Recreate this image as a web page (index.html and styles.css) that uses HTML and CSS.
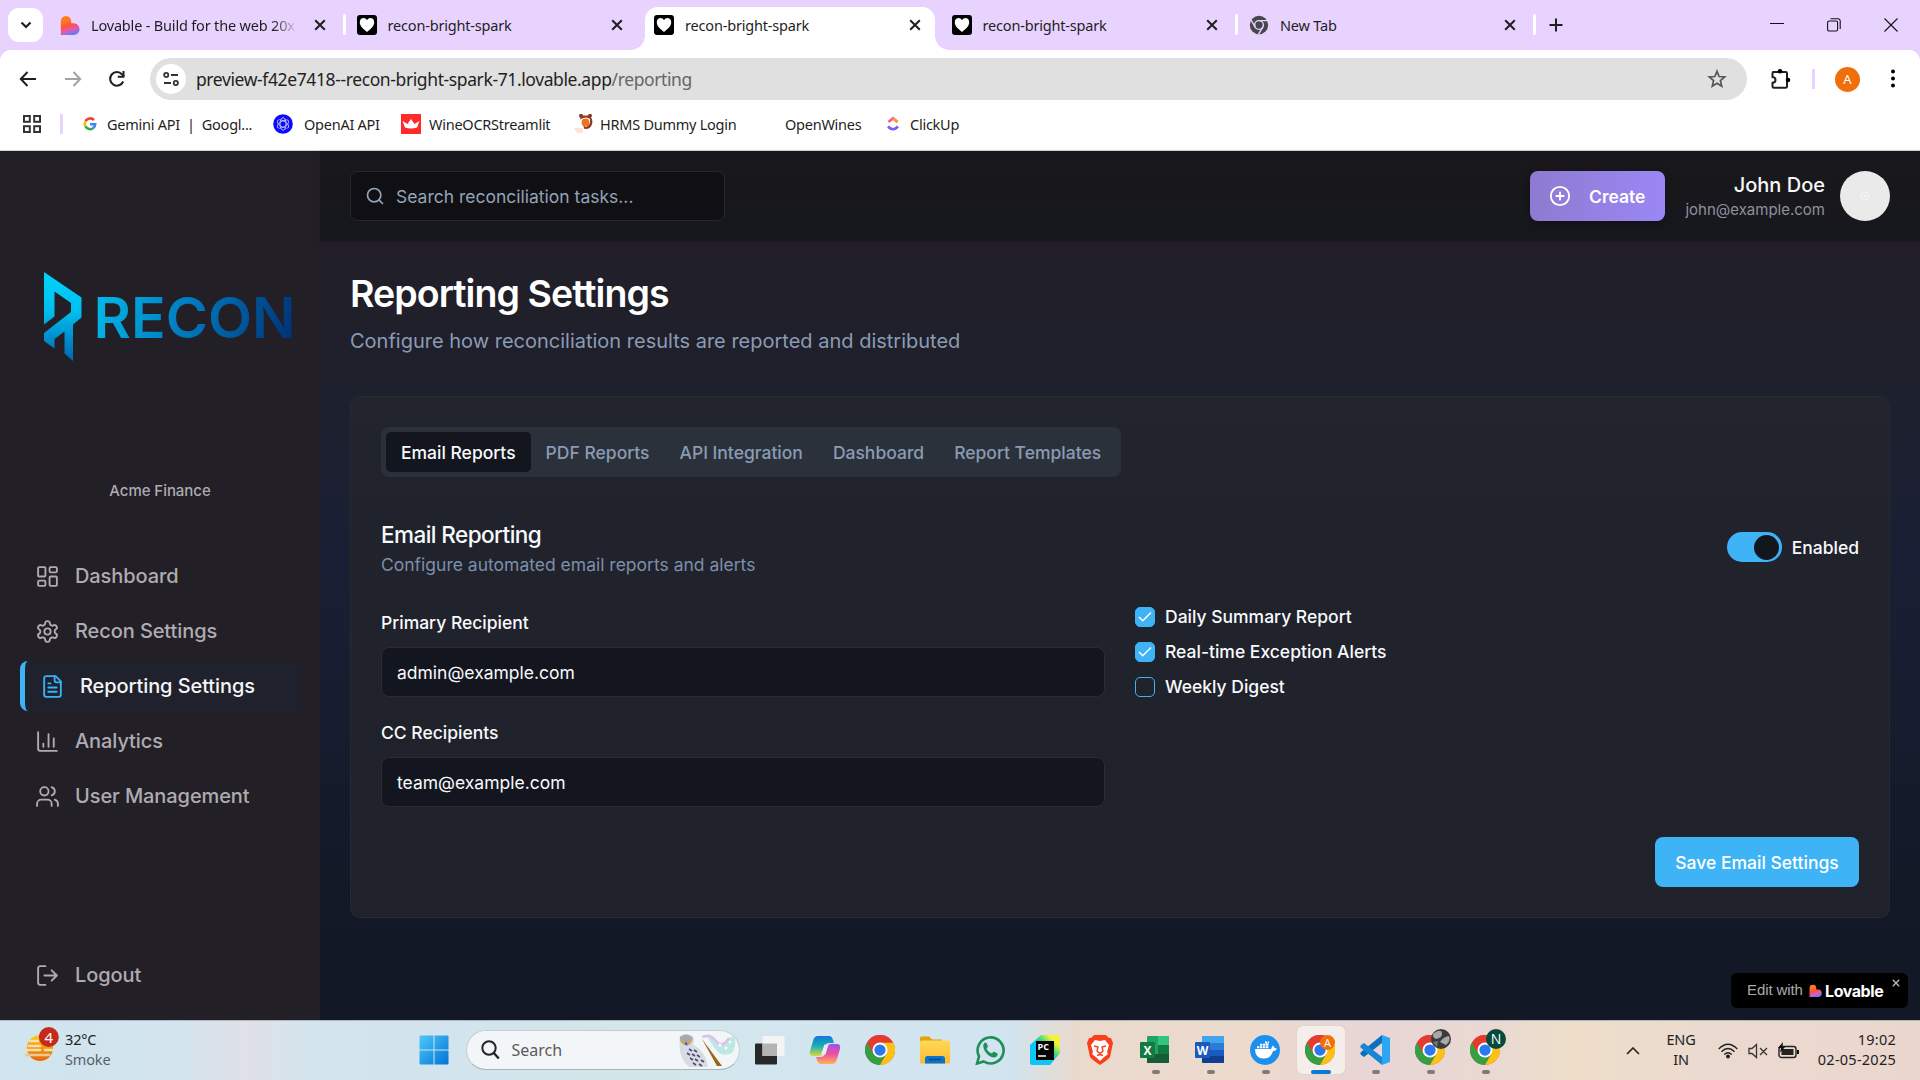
FILE: index.html
```html
<!DOCTYPE html>
<html lang="en">
<head>
<meta charset="utf-8">
<title>recon-bright-spark</title>
<link rel="stylesheet" href="styles.css">
</head>
<body>
<svg class="defs" width="0" height="0">
  <defs>
    <linearGradient id="lovable" x1="0.3" y1="0" x2="0.6" y2="1"><stop offset="0.2" stop-color="#ff7a1a"/><stop offset="0.5" stop-color="#ff5040"/><stop offset="0.72" stop-color="#e05bb0"/><stop offset="1" stop-color="#5c7cff"/></linearGradient>
    <linearGradient id="gold" x1="0" y1="0" x2="0" y2="1"><stop offset="0" stop-color="#ffd75a"/><stop offset="1" stop-color="#fdbb2d"/></linearGradient>
    <linearGradient id="win" x1="0" y1="0" x2="1" y2="1"><stop offset="0" stop-color="#4cc9fb"/><stop offset="1" stop-color="#0273d4"/></linearGradient>
    <symbol id="s-lovable" viewBox="0 0 24 24"><path d="M1 7.500a6.200 6.200 0 0 1 12.400 0V10h3.100a6.900 6.900 0 0 1 0 14H1z" fill="url(#lovable)"/></symbol>
    <symbol id="s-heart" viewBox="0 0 20 20"><rect width="20" height="20" rx="3"/><path d="M10 17C5 13 2.800 10.500 2.800 7.200c0-4.400 5.200-5.500 7.200-2 2-3.500 7.200-2.400 7.200 2C17.200 10.500 15 13 10 17z" fill="#fff"/></symbol>
    <symbol id="s-x" viewBox="0 0 10 10"><path d="M1 1l8 8M9 1L1 9" stroke="currentColor" stroke-width="1.700" fill="none"/></symbol>
    <symbol id="s-chrome" viewBox="0 0 48 48"><circle cx="24" cy="24" r="24" fill="#ea4335"/><path d="M3.200 12A24 24 0 0 0 24 48l10.400-18L13.600 30z" fill="#34a043"/><path d="M24 48A24 24 0 0 0 44.800 12H24l10.400 18z" fill="#fbc116"/><path d="M3.200 12A24 24 0 0 1 44.800 12H24L13.600 30z" fill="#e33b2e"/><circle cx="24" cy="24" r="12" fill="#fff"/><circle cx="24" cy="24" r="9" fill="#2b78ee"/></symbol>
  </defs>
</svg>

<header class="browser">
  <div class="tabstrip">
    <button class="tabsearch"><svg width="12" height="8" viewBox="0 0 12 8"><path d="M1.500 1.500L6 6l4.500-4.500" fill="none" stroke="#1f1f1f" stroke-width="2.200"/></svg></button>
    <div class="tab first"><svg class="fav" width="20" height="20"><use href="#s-lovable"/></svg><span class="t fade">Lovable - Build for the web 20x</span><svg class="x" width="12" height="12"><use href="#s-x"/></svg></div>
    <div class="tab sepl"><svg class="fav" width="20" height="20"><use href="#s-heart"/></svg><span class="t">recon-bright-spark</span><svg class="x" width="12" height="12"><use href="#s-x"/></svg></div>
    <div class="tab active"><svg class="fav" width="20" height="20"><use href="#s-heart"/></svg><span class="t">recon-bright-spark</span><svg class="x" width="12" height="12"><use href="#s-x"/></svg></div>
    <div class="tab"><svg class="fav" width="20" height="20"><use href="#s-heart"/></svg><span class="t">recon-bright-spark</span><svg class="x" width="12" height="12"><use href="#s-x"/></svg></div>
    <div class="tab sepl sepr"><svg class="fav" width="20" height="20" viewBox="0 0 48 48"><circle cx="24" cy="24" r="22" fill="#46474b"/><g stroke="#e8d3ff" stroke-width="3.500" fill="none"><circle cx="24" cy="24" r="10.500"/><path d="M24 13.500H44M15 29L5 12M33 29L23 46"/></g></svg><span class="t">New Tab</span><svg class="x" width="12" height="12"><use href="#s-x"/></svg></div>
    <svg class="plus" width="14" height="14" viewBox="0 0 14 14"><path d="M7 .5v13M.5 7h13" stroke="#1f1f1f" stroke-width="2"/></svg>
    <div class="winctl">
      <svg width="14" height="14" viewBox="0 0 14 14"><path d="M0 5.500h14" stroke="#111"/></svg>
      <svg width="14" height="14" viewBox="0 0 14 14"><g fill="none" stroke="#111" stroke-width="1.100"><rect x=".6" y="3" width="10" height="10" rx="1.500"/><path d="M3.500 .8h7.500a2.200 2.200 0 0 1 2.200 2.200v8"/></g></svg>
      <svg width="14" height="14" viewBox="0 0 14 14"><path d="M.5.5l13 13M13.500.5l-13 13" stroke="#111" stroke-width="1.100"/></svg>
    </div>
  </div>
  <div class="toolbar">
    <div class="navbtns">
      <svg width="18" height="16" viewBox="0 0 18 16"><path d="M17 8H2M8.500 1L1.800 8l6.700 7" fill="none" stroke="#1f1f1f" stroke-width="2"/></svg>
      <svg width="18" height="16" viewBox="0 0 18 16"><path d="M1 8h15M9.500 1l6.700 7-6.700 7" fill="none" stroke="#a3a3a3" stroke-width="2"/></svg>
      <svg width="18" height="18" viewBox="0 0 18 18"><path d="M15.200 11.500A6.800 6.800 0 1 1 14 4.300l2 2" fill="none" stroke="#1f1f1f" stroke-width="2"/><path d="M15.500 1v5.700H9.800" fill="none" stroke="#1f1f1f" stroke-width="2"/></svg>
    </div>
    <div class="omni">
      <span class="site"><svg width="16" height="14" viewBox="0 0 16 14"><g fill="none" stroke="#333" stroke-width="1.800"><circle cx="3.200" cy="3" r="2.100"/><path d="M8 3h7M1 11h7"/><circle cx="12.800" cy="11" r="2.100"/></g></svg></span>
      <span class="url">preview-f42e7418--recon-bright-spark-71.lovable.app<span class="path">/reporting</span></span>
      <svg class="star" width="20" height="20" viewBox="0 0 20 20"><path d="M10 2.200l2.100 5.300 5.600.4-4.300 3.700 1.300 5.600L10 14.200l-4.700 3 1.300-5.600L2.300 7.900l5.600-.4z" fill="none" stroke="#555" stroke-width="1.700"/></svg>
    </div>
    <svg class="puzzle" width="22" height="22" viewBox="0 0 22 22"><path d="M2.500 4h13.200q1.300 0 1.300 1.300v13.200q0 1.300-1.300 1.300H3.800q-1.300 0-1.300-1.300v-3.700c4-.5 4-5.300 0-5.800V5.300q0-1.300 1.300-1.300z" fill="none" stroke="#1f1f1f" stroke-width="2"/><circle cx="10" cy="3.200" r="2.300"/><circle cx="18" cy="12" r="2.300"/></svg>
    <i class="tsep"></i>
    <span class="ava">A</span>
    <svg class="dots" width="6" height="22" viewBox="0 0 6 22"><circle cx="3" cy="3.500" r="2"/><circle cx="3" cy="10.500" r="2"/><circle cx="3" cy="17.500" r="2"/></svg>
  </div>
  <div class="bookmarks">
    <svg class="apps" width="18" height="18" viewBox="0 0 18 18"><g fill="none" stroke="#333" stroke-width="2"><rect x="1" y="1" width="5.800" height="5.800"/><rect x="11.200" y="1" width="5.800" height="5.800"/><rect x="1" y="11.200" width="5.800" height="5.800"/><rect x="11.200" y="11.200" width="5.800" height="5.800"/></g></svg>
    <i class="bsep"></i>
    <div class="bm gem"><svg width="20" height="20" viewBox="0 0 20 20"><g fill="none" stroke-width="2.600"><path d="M14 6a5.300 5.300 0 0 0-8.500 1.200" stroke="#ea4335"/><path d="M5.400 7.200a5.500 5.500 0 0 0 0 5.200" stroke="#fbbc05"/><path d="M5.400 12.400a5.300 5.300 0 0 0 8 1.600" stroke="#34a853"/><path d="M13.300 14.100a5 5 0 0 0 1.900-3.800H10" stroke="#4285f4"/></g></svg><span>Gemini API &nbsp;|&nbsp; Googl...</span></div>
    <div class="bm oai"><svg width="20" height="20" viewBox="0 0 20 20"><circle cx="10" cy="10" r="9.800" fill="#0a0aff"/><g fill="none" stroke="#c8cbff" stroke-width=".9"><ellipse cx="10" cy="10" rx="3" ry="6.300"/><ellipse cx="10" cy="10" rx="3" ry="6.300" transform="rotate(60 10 10)"/><ellipse cx="10" cy="10" rx="3" ry="6.300" transform="rotate(120 10 10)"/></g></svg><span>OpenAI API</span></div>
    <div class="bm wine"><svg width="20" height="20" viewBox="0 0 20 20"><path fill="#ff2b2b" d="M0 0h20v20H0z"/><path d="M1.500 7l5 3L10 5l3.500 5 5-3-2.500 6.500q-6 1.800-12 0z" fill="#fff"/></svg><span>WineOCRStreamlit</span></div>
    <div class="bm hrms"><svg width="20" height="20" viewBox="0 0 20 20"><path d="M0 14h9v5H3z" fill="#fbe4d5"/><path d="M6 3.500a2 2 0 1 1 3-2l5 0a2 2 0 1 1 3 2q2.500 3 .5 8-2 4-7 3.500" fill="#8c3b22"/><path d="M7 5q5-3 9 0 1 6-4 8-6-2-5-8z" fill="#fff"/><circle cx="11.500" cy="8.500" r="3.900" fill="#f0731b"/></svg><span>HRMS Dummy Login</span></div>
    <div class="bm ow"><span>OpenWines</span></div>
    <div class="bm cu"><svg width="20" height="20" viewBox="0 0 20 20"><path d="M5.500 8L10 4.200 14.500 8" fill="none" stroke="#ff5b8c" stroke-width="2.700"/><path d="M10 4.200L14.500 8" stroke="#ff9a2b" stroke-width="2.700"/><path d="M5 12.500q5 5.500 10 0" fill="none" stroke="#7a5cff" stroke-width="2.700"/></svg><span>ClickUp</span></div>
  </div>
</header>

<div class="app">
  <aside class="side">
    <svg class="logo" width="260" height="92" viewBox="0 0 260 92">
      <defs>
        <linearGradient id="lg1" x1="0" y1="0" x2="0" y2="1"><stop offset="0.1" stop-color="#00d0f8"/><stop offset="0.45" stop-color="#00bdee"/><stop offset="1" stop-color="#0064b0"/></linearGradient>
        <linearGradient id="lg2" gradientUnits="userSpaceOnUse" x1="60" y1="15" x2="245" y2="78"><stop offset="0" stop-color="#02b8ea"/><stop offset="0.5" stop-color="#0076bb"/><stop offset="1" stop-color="#003478"/></linearGradient>
      </defs>
      <path fill="url(#lg1)" d="M4 1l37.500 25.500v20l-8.500 7V90l-8.500-7.500V60.500L14.500 68v9.500L4 70V62l27-21V32L14.500 20.500v25L4 53.500z"/>
      <text class="brand" x="53.500" y="67" textLength="202" lengthAdjust="spacingAndGlyphs" fill="url(#lg2)">RECON</text>
    </svg>
    <p class="org">Acme Finance</p>
    <nav class="nav">
      <a class="ni"><svg class="ic" viewBox="0 0 24 24"><rect x="3" y="3" width="7" height="9" rx="1"/><rect x="14" y="3" width="7" height="5" rx="1"/><rect x="14" y="12" width="7" height="9" rx="1"/><rect x="3" y="16" width="7" height="5" rx="1"/></svg>Dashboard</a>
      <a class="ni"><svg class="ic" viewBox="0 0 24 24"><path d="M12.220 2h-.44a2 2 0 0 0-2 2v.18a2 2 0 0 1-1 1.730l-.43.25a2 2 0 0 1-2 0l-.15-.08a2 2 0 0 0-2.730.73l-.22.38a2 2 0 0 0 .73 2.730l.15.1a2 2 0 0 1 1 1.720v.51a2 2 0 0 1-1 1.740l-.15.09a2 2 0 0 0-.73 2.730l.22.38a2 2 0 0 0 2.730.73l.15-.08a2 2 0 0 1 2 0l.43.25a2 2 0 0 1 1 1.730V20a2 2 0 0 0 2 2h.44a2 2 0 0 0 2-2v-.18a2 2 0 0 1 1-1.730l.43-.25a2 2 0 0 1 2 0l.15.08a2 2 0 0 0 2.730-.73l.22-.39a2 2 0 0 0-.73-2.730l-.15-.08a2 2 0 0 1-1-1.740v-.5a2 2 0 0 1 1-1.740l.15-.09a2 2 0 0 0 .73-2.730l-.22-.38a2 2 0 0 0-2.730-.73l-.15.08a2 2 0 0 1-2 0l-.43-.25a2 2 0 0 1-1-1.730V4a2 2 0 0 0-2-2z"/><circle cx="12" cy="12" r="3"/></svg>Recon Settings</a>
      <a class="ni on"><svg class="ic" viewBox="0 0 24 24"><path d="M15 2H6a2 2 0 0 0-2 2v16a2 2 0 0 0 2 2h12a2 2 0 0 0 2-2V7Z"/><path d="M14 2v4a2 2 0 0 0 2 2h4M10 9H8M16 13H8M16 17H8"/></svg>Reporting Settings</a>
      <a class="ni"><svg class="ic" viewBox="0 0 24 24"><path d="M3 3v16a2 2 0 0 0 2 2h16M18 17V9M13 17V5M8 17v-3"/></svg>Analytics</a>
      <a class="ni"><svg class="ic" viewBox="0 0 24 24"><path d="M16 21v-2a4 4 0 0 0-4-4H6a4 4 0 0 0-4 4v2"/><circle cx="9" cy="7" r="4"/><path d="M22 21v-2a4 4 0 0 0-3-3.870M16 3.130a4 4 0 0 1 0 7.750"/></svg>User Management</a>
    </nav>
    <a class="ni out"><svg class="ic" viewBox="0 0 24 24"><path d="M10 3H5a2 2 0 0 0-2 2v14a2 2 0 0 0 2 2h5M16 17l5-5-5-5M21 12H9"/></svg>Logout</a>
  </aside>
  <div class="content">
    <div class="top">
      <div class="search"><svg width="20" height="20" viewBox="0 0 24 24" fill="none" stroke="#94a3b8" stroke-width="2" stroke-linecap="round"><circle cx="11" cy="11" r="8"/><path d="M21 21l-4.300-4.300"/></svg><span>Search reconciliation tasks...</span></div>
      <button class="create"><svg width="22" height="22" viewBox="0 0 24 24" fill="none" stroke="#fff" stroke-width="2" stroke-linecap="round"><circle cx="12" cy="12" r="10"/><path d="M8 12h8M12 8v8"/></svg><span>Create</span></button>
      <div class="who"><b>John Doe</b><span>john@example.com</span></div>
      <svg class="pic" width="50" height="50" viewBox="0 0 50 50"><circle cx="25" cy="25" r="25" fill="#eaeaea"/><circle cx="25" cy="25" r="5" fill="#efefef"/><circle cx="25" cy="25" r="1.700" fill="#fbfbfb" stroke="#ddd" stroke-width=".6"/></svg>
    </div>
    <main class="main">
      <h1>Reporting Settings</h1>
      <p class="lead">Configure how reconciliation results are reported and distributed</p>
      <section class="card">
        <div class="tabs"><span class="on">Email Reports</span><span>PDF Reports</span><span>API Integration</span><span>Dashboard</span><span>Report Templates</span></div>
        <div class="sechead">
          <div><h3>Email Reporting</h3><p>Configure automated email reports and alerts</p></div>
          <div class="enable"><i class="switch"></i><span>Enabled</span></div>
        </div>
        <div class="cols">
          <div class="fields">
            <label>Primary Recipient</label><div class="inp">admin@example.com</div>
            <label>CC Recipients</label><div class="inp">team@example.com</div>
          </div>
          <div class="checks">
            <div><i class="cb ck"><svg width="18" height="18" viewBox="0 0 24 24"><path d="M20 6L9 17l-5-5"/></svg></i><span>Daily Summary Report</span></div>
            <div><i class="cb ck"><svg width="18" height="18" viewBox="0 0 24 24"><path d="M20 6L9 17l-5-5"/></svg></i><span>Real-time Exception Alerts</span></div>
            <div><i class="cb"></i><span>Weekly Digest</span></div>
          </div>
        </div>
        <div class="foot"><button class="save">Save Email Settings</button></div>
      </section>
    </main>
  </div>
  <div class="badge"><span class="ew">Edit with</span><svg width="13" height="13"><use href="#s-lovable"/></svg><b>Lovable</b><svg class="bx" width="8" height="8"><use href="#s-x"/></svg></div>
</div>

<footer class="taskbar">
  <div class="weather">
    <svg width="36" height="38" viewBox="0 0 36 38"><defs><linearGradient id="sun" x1="0" y1="0" x2="0" y2="1"><stop offset="0" stop-color="#ffcc12"/><stop offset="1" stop-color="#e8640c"/></linearGradient></defs><circle cx="16" cy="22" r="13" fill="url(#sun)"/><g stroke="#f6dfae" stroke-width="2.600" stroke-linecap="round"><path d="M6 15h8M5 20h11M2 24h14M21 24h7" /><path d="M2 29h23" stroke="#e9c993"/></g><circle cx="24.800" cy="11" r="10" fill="#c42b1c"/><text x="24.800" y="16.500" class="n4">4</text></svg>
    <div class="wt"><span>32°C</span><span class="dim">Smoke</span></div>
  </div>
  <div class="apps-row">
    <span class="cell"><svg width="30" height="30" viewBox="0 0 30 30"><g fill="url(#win)"><path d="M.5 1.500a1 1 0 0 1 1-1h13v14H.5zM15.500.5h13a1 1 0 0 1 1 1v13h-14zM.5 15.500h14v14h-13a1 1 0 0 1-1-1zM15.500 15.500h14v13a1 1 0 0 1-1 1h-13z"/></g></svg></span>
    <div class="tsearch"><svg width="19" height="20" viewBox="0 0 19 20"><circle cx="8" cy="8" r="6.700" fill="none" stroke="#222" stroke-width="2"/><path d="M12.800 13l5 5.500" stroke="#222" stroke-width="2.400"/></svg><span>Search</span>
      <svg class="owl" width="60" height="34" viewBox="0 0 60 34">
        <path d="M3 3Q9-1 16 3q2 4 0 9 12 5 15 22H12Q0 24 3 3z" fill="#d8dbe2"/><path d="M3 4Q9-1 15 4q2 5-5 9-8-2-7-9z" fill="#a5a8b0"/><circle cx="6" cy="8" r="1.500" fill="#e8a520"/><circle cx="12.500" cy="8" r="1.500" fill="#e8a520"/><path d="M9 9l1.500 3L8 11z" fill="#333"/>
        <g stroke="#4b4a72" stroke-width="1.600"><path d="M12 16l3 2M17 17l3 2M10 20l3 2M15 21l3 2M20 22l3 2M13 25l3 2M18 26l3 2M24 27l3 2M16 30l3 2M22 31l3 2"/></g>
        <path d="M25 5q8-5 14 3t13-3q4-3 6 1 1 8-3 14-9 4-14-1T31 5q-3-1-6 0z" fill="#bce9e1"/><path d="M25 4q8-4 14 4t13-3" fill="none" stroke="#e5bdec" stroke-width="2.500"/><g fill="#fff"><circle cx="43" cy="12" r="1.500"/><circle cx="49" cy="15" r="1.400"/><circle cx="53" cy="9" r="1.200"/></g>
        <path d="M25 6l20 27h-5z" fill="#9a6514"/>
      </svg>
    </div>
    <span class="cell"><svg width="30" height="30" viewBox="0 0 30 30"><rect x="0" y="8.500" width="22" height="21" rx="1" fill="#282828"/><rect x="7.500" y="1" width="22" height="20" rx="1" fill="#f4f4f4"/><path d="M7.500 8.500H22V21H7.500z" fill="#b4b4b4"/></svg></span>
    <span class="cell"><svg width="32" height="30" viewBox="0 0 32 30"><defs><linearGradient id="c1" x1="0" y1="0" x2="0" y2="1"><stop offset="0" stop-color="#1476dd"/><stop offset=".5" stop-color="#18b0b8"/><stop offset="1" stop-color="#d9d93a"/></linearGradient><linearGradient id="c2" x1="0" y1="0" x2="0" y2="1"><stop offset="0" stop-color="#9a55ee"/><stop offset=".5" stop-color="#ee4f9b"/><stop offset="1" stop-color="#ffb25c"/></linearGradient></defs><path d="M9 1h11q3 0 4 4l1 3h-5q-3 0-4 4l-2 6q-1 3-4 3H4q-4 0-3-5L4 6q1-5 5-5z" fill="url(#c1)"/><path d="M23 29H12q-3 0-4-4l-1-3h5q3 0 4-4l2-6q1-3 4-3h6q4 0 3 5l-3 10q-1 5-5 5z" fill="url(#c2)"/><path d="M15.500 9.500h4l-3 10h-4.500z" fill="#e8eef5"/></svg></span>
    <span class="cell"><svg width="30" height="30"><use href="#s-chrome"/></svg></span>
    <span class="cell"><svg width="30" height="30" viewBox="0 0 30 30"><path d="M0 3q0-1.500 1.500-1.500H9l3 3h10v6H0z" fill="#e5a20a"/><rect x="0" y="5.500" width="30" height="23" rx="1.500" fill="url(#gold)"/><path d="M5 28.500v-5q0-2.500 2.500-2.500h15q2.500 0 2.500 2.500v5z" fill="#0c73c9"/><path d="M9 24.500h12" stroke="#064a88" stroke-width="1.500"/></svg></span>
    <span class="cell"><svg width="30" height="30" viewBox="0 0 30 30"><path d="M2 28.500l2-7.200A13 13 0 1 1 8.800 26.500z" fill="none" stroke="#1f8f5a" stroke-width="2.600"/><path d="M10 7.500c-5 3 2 15 9 15 3 0 4-3 3.500-4l-3.700-2-2 2c-2.500-1-4.500-3-5.300-5l1.500-2L11.500 8z" fill="#1f8f5a"/></svg></span>
    <span class="cell"><svg width="30" height="30" viewBox="0 0 30 30"><defs><linearGradient id="py" x1="0" y1="1" x2="1" y2="0"><stop offset=".45" stop-color="#0cc6f5"/><stop offset=".6" stop-color="#31d88b"/><stop offset=".8" stop-color="#f4f13a"/></linearGradient></defs><path d="M11 0h17q2 0 2 2v16L20 30H2q-2 0-2-2V10z" fill="url(#py)"/><path d="M6 6h18v19H6z"/><text class="pc" x="7.500" y="15">PC</text><path d="M8 21h8" stroke="#fff" stroke-width="1.500"/></svg></span>
    <span class="cell"><svg width="26" height="30" viewBox="0 0 26 30"><path d="M7 0h12l3 3h2l2 5-3 14q-1 2-10 8Q4 24 3 22L0 8l2-5h2z" fill="#f8401c"/><path d="M8 5l5 1 5-1 4 5-2 7 1 2-5 4-3 3-3-3-5-4 1-2-2-7z" fill="#fff"/><path d="M7 11l4 1-1 4 3 2.500 3-2.500-1-4 4-1M10 20.500l3-1 3 1" stroke="#f8401c" stroke-width="1.400" fill="none"/></svg></span>
    <span class="cell run"><svg width="30" height="30" viewBox="0 0 30 30"><rect x="7" y="1" width="22" height="27" rx="1" fill="#21a366"/><path d="M18 1h10q1 0 1 1v8H18z" fill="#33c481"/><path d="M7 19h22v8q0 1-1 1H8q-1 0-1-1z" fill="#185c37"/><path d="M18 10h11v9H18z" fill="#107c41"/><rect x="0" y="7" width="15" height="16" rx="1" fill="#107c41"/><text class="ms" x="7.500" y="20">X</text></svg></span>
    <span class="cell run"><svg width="30" height="30" viewBox="0 0 30 30"><rect x="7" y="1" width="22" height="27" rx="1" fill="#2b7cd3"/><path d="M7 8V2q0-1 1-1h20q1 0 1 1v6z" fill="#41a5ee"/><path d="M7 15h22v6H7z" fill="#185abd"/><path d="M7 21h22v6q0 1-1 1H8q-1 0-1-1z" fill="#103f91"/><rect x="0" y="7" width="15" height="16" rx="1" fill="#185abd"/><text class="ms" x="7.500" y="20">W</text></svg></span>
    <span class="cell run"><svg width="30" height="30" viewBox="0 0 30 30"><circle cx="15" cy="15" r="15" fill="#1d90ee"/><path d="M5 14h16q1-3 2-3.500 1.500 1 1.500 2.500 1.500 0 2.500.7-1 2.300-4 2.300-2 7.500-9.500 7.500Q5 23.500 5 14z" fill="#fff"/><path d="M7 12.200h12M10 9.800h9M15 7.400h4" stroke="#fff" stroke-width="2" stroke-dasharray="2.400 .6"/></svg></span>
    <span class="cell run cur"><svg width="30" height="30" viewBox="0 0 30 30"><use href="#s-chrome" width="30" height="30"/><circle cx="22.500" cy="7.500" r="7.500" fill="#f06f0a"/><text class="av" x="22.500" y="11.500">A</text></svg></span>
    <span class="cell run"><svg width="30" height="30" viewBox="0 0 30 30"><path d="M22 0l8 3v24l-8 3z" fill="#2aa7f0"/><path d="M22 0v8L4 22l-3.500-2.500v-2z" fill="#0a6fbd"/><path d="M22 30v-8L4 8 .5 10.500v2z" fill="#1587d6"/></svg></span>
    <span class="cell run"><svg class="over" width="36" height="36" viewBox="0 0 36 36"><use href="#s-chrome" y="6" width="30" height="30"/><circle cx="26" cy="10" r="10" fill="#3c3c3e"/><path d="M19 4q8-5 8 1 0 4-6 5-5-2-2-6zM25 13q3-5 9-6 2 5-3 9z" fill="#a8a8a8"/><path d="M18 13l5-1-1 6z" fill="#777"/></svg></span>
    <span class="cell run"><svg class="over" width="36" height="36" viewBox="0 0 36 36"><use href="#s-chrome" y="6" width="30" height="30"/><circle cx="26" cy="10" r="10" fill="#064a3d"/><text class="av nn" x="26" y="15">N</text></svg></span>
  </div>
  <div class="tray">
    <svg class="chev" width="14" height="8" viewBox="0 0 14 8"><path d="M1 7l6-6 6 6" fill="none" stroke="#222" stroke-width="1.600"/></svg>
    <div class="lang"><span>ENG</span><span>IN</span></div>
    <svg class="wifi" width="20" height="16" viewBox="0 0 20 16"><g fill="none" stroke="#222" stroke-width="1.400"><path d="M.7 6Q10-3.500 19.300 6M3.500 8.800q6.500-6.400 13 0M6.300 11.500q3.700-3.500 7.400 0"/></g><circle cx="10" cy="13.500" r="2" fill="#222"/></svg>
    <svg class="spk" width="20" height="16" viewBox="0 0 20 16"><path d="M1 5.500h3L8.500 1.500v13L4 10.500H1zM12 5l7 7M19 5l-7 7" fill="none" stroke="#333" stroke-width="1.300"/></svg>
    <svg class="bat" width="21" height="17" viewBox="0 0 21 17"><rect x="1" y="4.500" width="17" height="11" rx="2.500" fill="none" stroke="#222" stroke-width="1.400"/><rect x="3.500" y="7" width="12" height="6" fill="#222"/><path d="M19 8h2v4h-2zM5 0L0 6h3L2 10.500 7.500 4.500H4.500z" fill="#111"/></svg>
    <div class="clock"><span>19:02</span><span>02-05-2025</span></div>
  </div>
</footer>
</body>
</html>
```
FILE: styles.css
```css
* { box-sizing: border-box; }
body { margin: 0; width: 1920px; height: 1080px; overflow: hidden; display: flex; flex-direction: column; font-family: Inter, sans-serif; background: #fff; }
.defs { position: absolute; }
svg { flex: none; display: block; }
button { border: 0; padding: 0; font: inherit; }
h1, h3, p { margin: 0; }

/* browser chrome */
.browser { height: 151px; border-bottom: 1px solid #c9d6d0; font-family: "Noto Sans", sans-serif; color: #1f1f1f; background: #e8d3ff; }
.tabstrip { height: 50px; display: flex; align-items: center; padding-left: 8px; }
.tabsearch { width: 35px; height: 34px; border-radius: 11px; background: #fff; display: flex; align-items: center; justify-content: center; margin-right: 7px; }
.tab { width: 297.5px; height: 43px; margin-top: 7px; padding: 0 14px 7px 9px; display: flex; align-items: center; flex: none; position: relative; }
.first { padding-left: 10px; }
.fav { margin-right: 11px; }
.t { flex: 1; font-size: 14.5px; letter-spacing: -0.18px; white-space: nowrap; overflow: hidden; }
.fade { flex: none; width: 207px; margin-right: auto; -webkit-mask-image: linear-gradient(90deg, #000 88%, transparent); mask-image: linear-gradient(90deg, #000 88%, transparent); }
.x { color: #1f1f1f; margin-right: 8px; }
.active { background: #fff; border-radius: 13px 13px 0 0; width: 290px; margin-right: 7.500px; }
.active .x { margin-right: 0; }
.active::before, .active::after { content: ""; position: absolute; bottom: 0; width: 14px; height: 14px; background: radial-gradient(circle at 0 0, transparent 13.500px, #fff 14px); left: -14px; }
.active::after { left: auto; right: -14px; background: radial-gradient(circle at 100% 0, transparent 13.500px, #fff 14px); }
.sepl::before, .sepr::after { content: ""; position: absolute; left: -5px; top: 7px; width: 3px; height: 21px; background: #fff; border-radius: 2px; }
.sepr::after { left: auto; right: 2px; }
.plus { margin-left: 11px; }
.winctl { margin-left: auto; display: flex; gap: 43px; padding-right: 22px; }
.toolbar { height: 58px; background: #fff; border-radius: 11px 11px 0 0; display: flex; align-items: center; padding-left: 19px; }
.navbtns { display: flex; gap: 26.500px; align-items: center; width: 131px; }
.omni { width: 1597px; height: 42px; border-radius: 21px; background: #e0e0e0; display: flex; align-items: center; padding: 0 20px 0 6px; }
.site { width: 30px; height: 30px; border-radius: 50%; background: #fff; display: flex; align-items: center; justify-content: center; margin-right: 10px; }
.url { font-size: 17.500px; letter-spacing: -0.39px; flex: 1; white-space: nowrap; }
.path { color: #666; }
.puzzle { margin-left: 23px; }
.tsep { width: 3px; height: 20px; background: #e8d3ff; margin: 0 20px 0 20px; }
.ava { width: 25px; height: 25px; border-radius: 50%; background: #f06f0a; color: #fff; font-size: 13px; display: flex; align-items: center; justify-content: center; margin-right: 30px; }
.bookmarks { height: 42px; background: #fff; display: flex; align-items: center; padding: 0 0 10px 23px; font-size: 14.500px; }
.bsep { width: 3px; height: 20px; background: #e8d3ff; margin: 0 20px 0 19px; }
.bm { display: flex; align-items: center; gap: 11px; letter-spacing: -0.25px; white-space: nowrap; }
.bm svg { margin-left: -3px; }
.gem { width: 193px; gap: 7px; } .oai { width: 128px; } .wine { width: 173px; gap: 8px; } .hrms { width: 208px; gap: 6px; } .ow { width: 101px; } .cu { gap: 7px; }

/* application */
.app { height: 869px; display: flex; position: relative; }
.side { width: 320px; background: #221f26; color: #aeacb2; display: flex; flex-direction: column; padding: 120px 20px 20px; }
.logo { margin-left: 20px; }
.brand { font: 600 57px Inter, sans-serif; }
.org { text-align: center; font-size: 15px; font-weight: 500; line-height: 20px; margin-top: 118px; letter-spacing: -0.05px; }
.nav { display: flex; flex-direction: column; gap: 5px; margin-top: 50px; }
.ni { height: 50px; padding-left: 15px; display: flex; align-items: center; gap: 15px; font-size: 20px; font-weight: 500; border-radius: 8px; letter-spacing: -0.09px; }
.ni.on { background: #1f212d; border-left: 5px solid #3eb3f5; color: #f5f5f7; }
.ni.on .ic { stroke: #33b4f5; }
.ic { width: 25px; height: 25px; fill: none; stroke: #aeacb2; stroke-width: 1.800; stroke-linecap: round; stroke-linejoin: round; }
.out { margin-top: auto; }
.content { width: 1600px; background: linear-gradient(#221f26 0%, #221f28 12%, #1d202d 28%, #1a1f35 46%, #131826 90%, #121826 100%); }
.top { height: 90px; background: linear-gradient(#19171b, #16181d); display: flex; align-items: center; padding: 0 30px; box-shadow: 0 3px 8px rgba(0,0,0,.12); }
.search { width: 375px; height: 50px; border: 1px solid #27272f; border-radius: 8px; background: #101014; display: flex; align-items: center; gap: 11px; padding-left: 14px; color: #94a3b8; font-size: 17.500px; }
.create { margin-left: auto; width: 135px; height: 50px; border-radius: 8px; background: linear-gradient(90deg, #8d7bd0, #9b87f5); color: #fff; font-weight: 600; font-size: 17.500px; display: flex; align-items: center; padding-left: 19px; gap: 18px; box-shadow: 0 3px 8px rgba(0,0,0,.3); }
.who { width: 160px; display: flex; flex-direction: column; align-items: flex-end; margin-right: 15px; padding-top: 3px; }
.who b { font-size: 20px; font-weight: 500; line-height: 25px; color: #f6f7f9; }
.who span { font-size: 15px; line-height: 24px; color: #8c929f; }
.main { padding: 30px; }
h1 { font-size: 37.500px; line-height: 45px; font-weight: 600; letter-spacing: -0.94px; color: #fff; }
.lead { font-size: 20px; line-height: 30px; margin-top: 10px; color: #8b9bb4; }
.card { margin-top: 40px; height: 522px; border: 1px solid #282a33; border-radius: 10px; background: linear-gradient(#22252c, #20222c 30%, #1f212b); padding: 30px; font-size: 17.500px; font-weight: 500; color: #f8fafc; }
.tabs { display: inline-flex; vertical-align: top; height: 50px; padding: 5px; border-radius: 8px; background: #2a313a; color: #8b9bb4; }
.tabs span { padding: 0 15px; border-radius: 5px; display: flex; align-items: center; }
.tabs .on { background: #13161f; color: #f8fafc; }
.sechead { display: flex; justify-content: space-between; align-items: center; height: 59px; margin-top: 42px; }
h3 { font-size: 22.500px; line-height: 32px; font-weight: 500; letter-spacing: -0.56px; }
.sechead p { line-height: 27px; color: #7d8fa9; font-weight: 400; }
.enable { display: flex; align-items: center; gap: 10px; margin-bottom: 3px; }
.switch { width: 55px; height: 30px; border-radius: 15px; background: #3eb3f5; display: flex; padding: 2.500px; justify-content: flex-end; }
.switch::before { content: ""; width: 25px; height: 25px; border-radius: 50%; background: #13161f; }
.cols { display: flex; gap: 30px; height: 236px; margin-top: 23px; }
.fields { width: 724px; padding-top: 11px; }
.fields label { display: block; line-height: 22px; }
.inp { height: 50px; margin: 13px 0 25px; border: 1px solid #292c37; border-radius: 8px; background: #13161f; display: flex; align-items: center; padding-left: 15px; font-weight: 400; }
.checks { display: flex; flex-direction: column; gap: 15px; padding-top: 6px; }
.checks div { display: flex; align-items: center; gap: 10px; height: 20px; }
.checks span { padding-bottom: 2px; }
.cb { width: 20px; height: 20px; border: 1px solid #3eb3f5; border-radius: 5px; display: flex; align-items: center; justify-content: center; }
.ck { background: #3eb3f5; }
.ck path { fill: none; stroke: #fff; stroke-width: 2; }
.foot { display: flex; justify-content: flex-end; }
.save { width: 204px; height: 50px; border-radius: 8px; background: #3eb3f5; color: #fff; }
.badge { position: absolute; left: 1731px; top: 822px; width: 177px; height: 35px; border-radius: 6px; background: #000; color: #aaa; font-size: 15px; display: flex; align-items: center; padding-left: 16px; white-space: nowrap; }
.ew { font-family: "Liberation Sans", Arial, sans-serif; width: 62px; letter-spacing: -0.1px; padding-bottom: 2px; }
.badge b { color: #fff; font-size: 16px; letter-spacing: -0.42px; margin-left: 3px; }
.bx { position: absolute; right: 8px; top: 6px; color: #bbb; }

/* Windows taskbar */
.taskbar { height: 60px; border-top: 1px solid #b3b5c0; font-family: "Noto Sans", sans-serif; color: #222; display: flex; align-items: center; background: linear-gradient(90deg, #d0e5ef 0, #d3e4ee 180px, #e0e0e8 245px, #d4e5ed 310px, #d2e3ee 400px, #d3e7e9 640px, #d3e6f0 800px, #d1e4ef 1010px, #ead9cd 1080px, #ecdacd 1250px, #e8d5d6 1370px, #ead9d2 1500px, #eedec9 1575px, #ebdacf 1700px, #ebd6ce 1920px); }
.weather { width: 406.500px; padding-left: 24px; display: flex; gap: 5px; align-items: flex-start; height: 50px; }
.n4 { font: 15px "Noto Sans", sans-serif; fill: #fff; text-anchor: middle; }
.wt, .lang, .clock { display: flex; flex-direction: column; font-size: 14.500px; line-height: 20px; letter-spacing: -0.15px; }
.wt { padding-top: 3px; }
.dim { color: #566068; }
.apps-row { display: flex; align-items: center; height: 60px; padding-bottom: 1px; }
.cell { width: 55px; height: 48px; display: flex; align-items: center; justify-content: center; position: relative; flex: none; }
.run::after { content: ""; position: absolute; bottom: 0; left: 24px; width: 8px; height: 4px; border-radius: 2px; background: #847a75; }
.cur::before { content: ""; position: absolute; left: 4px; top: 0; width: 48px; height: 48px; border-radius: 5px; background: #f5edea; box-shadow: 0 0 1px #aaa; }
.cur svg { position: relative; }
.cur::after { left: 18px; width: 20px; background: #0a78d4; bottom: 0; }
.over { margin: -6px -6px 0 0; }
.tsearch { width: 274px; height: 40px; margin: 0 3px 0 4px; border-radius: 20px; background: #f2f6f9; border: 1px solid #c6ced5; border-bottom-color: #a8b3ba; display: flex; align-items: center; padding: 0 2px 0 14px; gap: 12px; color: #5b5b5b; font-size: 16px; letter-spacing: 0; }
.owl { margin-left: auto; }
.ms { font: bold 12px "Open Sans", sans-serif; fill: #fff; text-anchor: middle; transform: translateY(-.5px); }
.pc { font: bold 9px "Open Sans", sans-serif; fill: #fff; }
.av { font: 11px "Open Sans", sans-serif; fill: #fff; text-anchor: middle; }
.nn { font-size: 14px; }
.tray { margin-left: auto; display: flex; align-items: center; padding-right: 24px; }
.lang, .clock { padding-bottom: 4px; }
.lang { align-items: center; width: 40px; margin: 0 17px 0 21px; }
.spk { margin: 0 10px; }
.clock { align-items: flex-end; width: 97px; letter-spacing: 0.25px; }
```
